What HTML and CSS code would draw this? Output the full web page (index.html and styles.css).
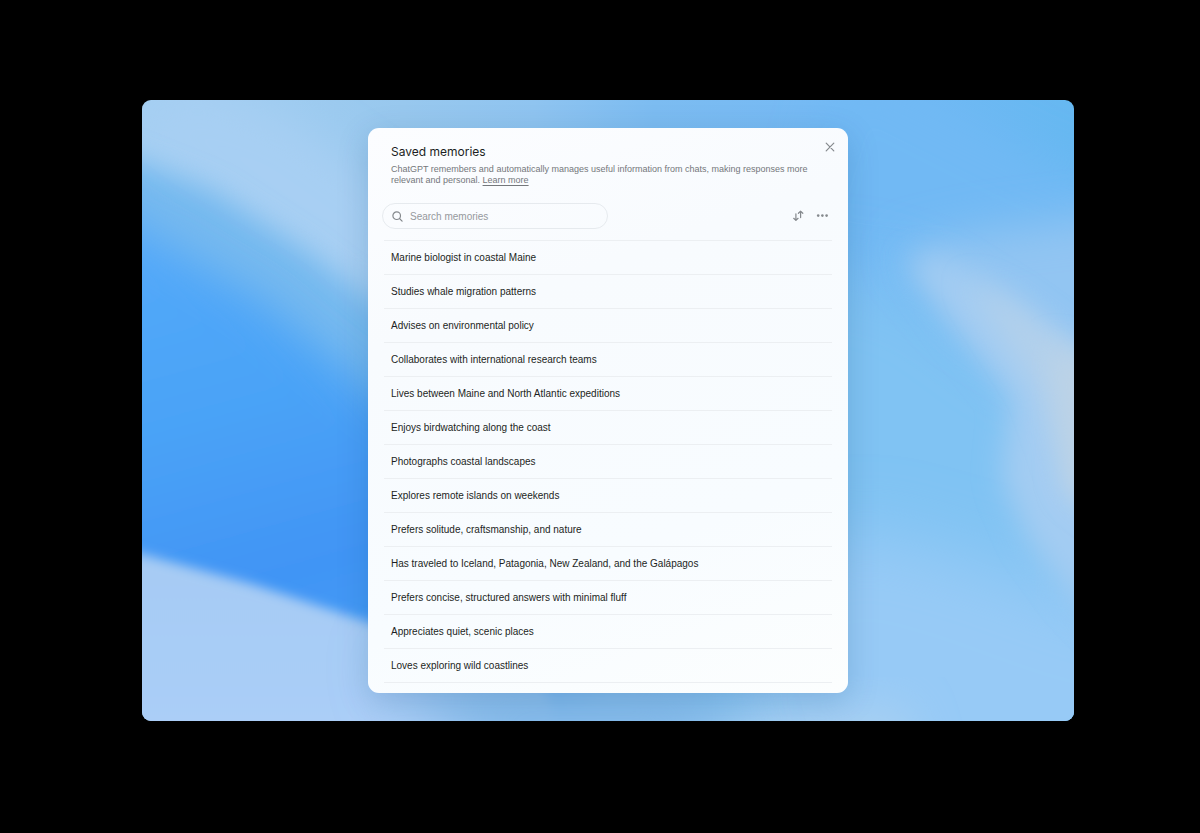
FILE: index.html
```html
<!DOCTYPE html>
<html lang="en">
<head>
  <meta charset="UTF-8">
  <meta name="viewport" content="width=device-width, initial-scale=1">
  <title>Saved memories</title>
  <link rel="stylesheet" href="styles.css">
</head>
<body>

  <main class="stage">
    <svg class="wallpaper" viewBox="0 0 932 621" preserveAspectRatio="none" aria-hidden="true">
      <defs>
        <linearGradient id="sky" x1="0" y1="0" x2="1" y2="0">
          <stop offset="0" stop-color="#a4cff2"/>
          <stop offset="0.28" stop-color="#98c8ee"/>
          <stop offset="0.42" stop-color="#8fc4f0"/>
          <stop offset="0.55" stop-color="#7cbcf1"/>
          <stop offset="0.78" stop-color="#73b9f5"/>
          <stop offset="1" stop-color="#66b8f1"/>
        </linearGradient>
        <linearGradient id="deep" x1="0" y1="0" x2="0.25" y2="1">
          <stop offset="0" stop-color="#57abfa"/>
          <stop offset="0.45" stop-color="#4aa3f7"/>
          <stop offset="0.75" stop-color="#4194f4"/>
          <stop offset="1" stop-color="#449ff7"/>
        </linearGradient>
        <linearGradient id="sand" x1="0" y1="0" x2="0" y2="1">
          <stop offset="0" stop-color="#a6cbf3"/>
          <stop offset="0.6" stop-color="#a9cdf7"/>
          <stop offset="1" stop-color="#b2d2f8"/>
        </linearGradient>
        <filter id="haze" x="-40%" y="-40%" width="180%" height="180%"><feGaussianBlur stdDeviation="34"/></filter>
        <filter id="soft" x="-30%" y="-30%" width="160%" height="160%"><feGaussianBlur stdDeviation="22"/></filter>
        <filter id="mid" x="-30%" y="-30%" width="160%" height="160%"><feGaussianBlur stdDeviation="14"/></filter>
        <filter id="crisp" x="-30%" y="-30%" width="160%" height="160%"><feGaussianBlur stdDeviation="6"/></filter>
      </defs>
      <rect width="932" height="621" fill="url(#sky)"/>
      <!-- right side -->
      <path d="M700 -40 L900 60 L990 90 L990 200 L640 160Z" fill="#71b9f4" filter="url(#soft)"/>
      <path d="M440 200 L690 170 L770 190 L880 270 L960 300 L960 680 L440 680Z" fill="#80c3f3" filter="url(#haze)"/>
      <path d="M600 470 L720 430 L830 460 L940 500 L1020 520 L1020 720 L600 720Z" fill="#97caf6" filter="url(#haze)"/>
      <path d="M760 150 L840 132 L1000 112 L1000 330 L900 270 L820 220Z" fill="#92c5f2" filter="url(#soft)"/>
      <path d="M765 160 L800 155 L870 198 L990 285 L1000 570 L930 500 L886 440 L860 380 L868 300 L810 225Z" fill="#a3ccf2" filter="url(#mid)"/>
      <path d="M825 180 L870 202 L990 290 L990 440 L930 390 L896 290Z" fill="#b2d0eb" filter="url(#mid)"/>
      <path d="M910 240 L980 290 L980 430 L925 390Z" fill="#bdd3e6" filter="url(#mid)"/>
      <path d="M520 626 L760 606 L790 700 L500 700Z" fill="#a9d0f2" filter="url(#soft)"/>
      <!-- left side -->
      <path d="M40 -20 L150 20 L250 90 L270 230 L120 140 L-20 40Z" fill="#a7cff3" filter="url(#soft)"/>
      <path d="M-60 40 L70 92 L160 150 L240 212 L440 320 L440 480 L-60 320Z" fill="#76b9ef" filter="url(#mid)"/>
      <path d="M-60 85 L0 130 L120 200 L240 300 L440 410 L440 640 L-60 500Z" fill="url(#deep)" filter="url(#soft)"/>
      <path d="M-60 438 L0 454 L110 484 L226 522 L400 575 L430 700 L-60 700Z" fill="url(#sand)" filter="url(#crisp)"/>
      <path d="M250 560 L560 560 L600 700 L360 700Z" fill="#85bbeb" filter="url(#haze)"/>
    </svg>

    <section class="modal" role="dialog" aria-labelledby="modal-title">
      <header class="modal-header">
        <div class="heading">
          <h1 id="modal-title">Saved memories</h1>
          <p>ChatGPT remembers and automatically manages useful information from chats, making responses more relevant and personal. <a href="#">Learn more</a></p>
        </div>
        <button class="icon-btn" type="button" aria-label="Close">
          <svg width="10" height="10" viewBox="0 0 10 10"><path d="M1.2 1.2l7.6 7.6M8.8 1.2L1.2 8.8"/></svg>
        </button>
      </header>

      <div class="toolbar">
        <label class="search">
          <svg width="11" height="11" viewBox="0 0 11 11"><circle cx="4.7" cy="4.7" r="3.8"/><path d="M7.5 7.5l2.6 2.6"/></svg>
          <input type="text" placeholder="Search memories" aria-label="Search memories">
        </label>
        <div class="actions">
          <button class="icon-btn" type="button" aria-label="Sort">
            <svg width="12" height="12" viewBox="0 0 12 12"><path d="M3.9 3.8v6.6M1.7 8.3l2.2 2.1 2.2-2.1M8.6 7.6V1.2M6.4 3.3l2.2-2.1 2.2 2.1"/></svg>
          </button>
          <button class="icon-btn dots" type="button" aria-label="More">
            <svg width="12" height="12" viewBox="0 0 12 12"><circle cx="2.2" cy="5.6" r="1.3"/><circle cx="6.4" cy="5.6" r="1.3"/><circle cx="10.6" cy="5.6" r="1.3"/></svg>
          </button>
        </div>
      </div>

      <ul class="memories">
        <li>Marine biologist in coastal Maine</li>
        <li>Studies whale migration patterns</li>
        <li>Advises on environmental policy</li>
        <li>Collaborates with international research teams</li>
        <li>Lives between Maine and North Atlantic expeditions</li>
        <li>Enjoys birdwatching along the coast</li>
        <li>Photographs coastal landscapes</li>
        <li>Explores remote islands on weekends</li>
        <li>Prefers solitude, craftsmanship, and nature</li>
        <li>Has traveled to Iceland, Patagonia, New Zealand, and the Galápagos</li>
        <li>Prefers concise, structured answers with minimal fluff</li>
        <li>Appreciates quiet, scenic places</li>
        <li>Loves exploring wild coastlines</li>
      </ul>
    </section>
  </main>

</body>
</html>
```

FILE: styles.css
```css
* {
  margin: 0;
  padding: 0;
  box-sizing: border-box;
}

body {
  background-color: #000;
  color: #1c1f23;
  font-family: "Liberation Sans", Arial, sans-serif;
  font-size: 10px;
}

.stage {
  position: relative;
  margin: 100px 126px 112px 142px;
  padding: 28px 16px;
  border-radius: 9px;
  overflow: hidden;
}

.wallpaper {
  position: absolute;
  top: 0;
  left: 0;
  width: 100%;
  height: 100%;
}

.modal {
  position: relative;
  max-width: 480px;
  margin: 0 auto;
  padding: 9px 8px 10px 14px;
  border-radius: 11px;
  background: linear-gradient(160deg, #fcfdff, #f8fbfe 30%, #f8fcff 70%, #fcfefe);
  box-shadow: 0 8px 32px rgba(10, 60, 110, 0.18);
}

.modal-header {
  display: flex;
  align-items: flex-start;
  justify-content: space-between;
}

.heading {
  padding: 7px 0 0 9px;
  max-width: 432px;
}

.heading h1 {
  font-family: Inter, "Liberation Sans", sans-serif;
  font-size: 12px;
  font-weight: 400;
  line-height: 16px;
}

.heading p {
  margin-top: 4px;
  font-size: 9px;
  line-height: 11px;
  color: #74777b;
}

.heading a {
  color: inherit;
  text-underline-offset: 2px;
}

.icon-btn {
  display: flex;
  flex-shrink: 0;
  align-items: center;
  justify-content: center;
  width: 20px;
  height: 20px;
  border: none;
  background: none;
  cursor: pointer;
}

.icon-btn svg,
.search svg {
  fill: none;
  stroke: #85898d;
  stroke-width: 1.2;
  stroke-linecap: round;
  stroke-linejoin: round;
}

.icon-btn.dots svg {
  fill: #85898d;
  stroke: none;
}

.toolbar {
  display: flex;
  align-items: center;
  justify-content: space-between;
  margin: 17px 8px 0 0;
}

.search {
  display: flex;
  align-items: center;
  gap: 7px;
  width: 226px;
  height: 26px;
  padding: 0 9px;
  border: 1px solid #e6eaee;
  border-radius: 13px;
}

.search svg {
  flex-shrink: 0;
}

.search input {
  flex: 1;
  min-width: 0;
  border: none;
  outline: none;
  background: none;
  color: inherit;
  font-family: inherit;
  font-size: 10px;
}

.search input::placeholder {
  color: #96999d;
}

.actions {
  display: flex;
  gap: 4px;
}

.memories {
  margin: 11px 8px 0 2px;
  border-top: 1px solid #eceff2;
  list-style: none;
}

.memories li {
  padding: 10px 7px;
  border-bottom: 1px solid #eceff2;
  line-height: 13px;
}
```
